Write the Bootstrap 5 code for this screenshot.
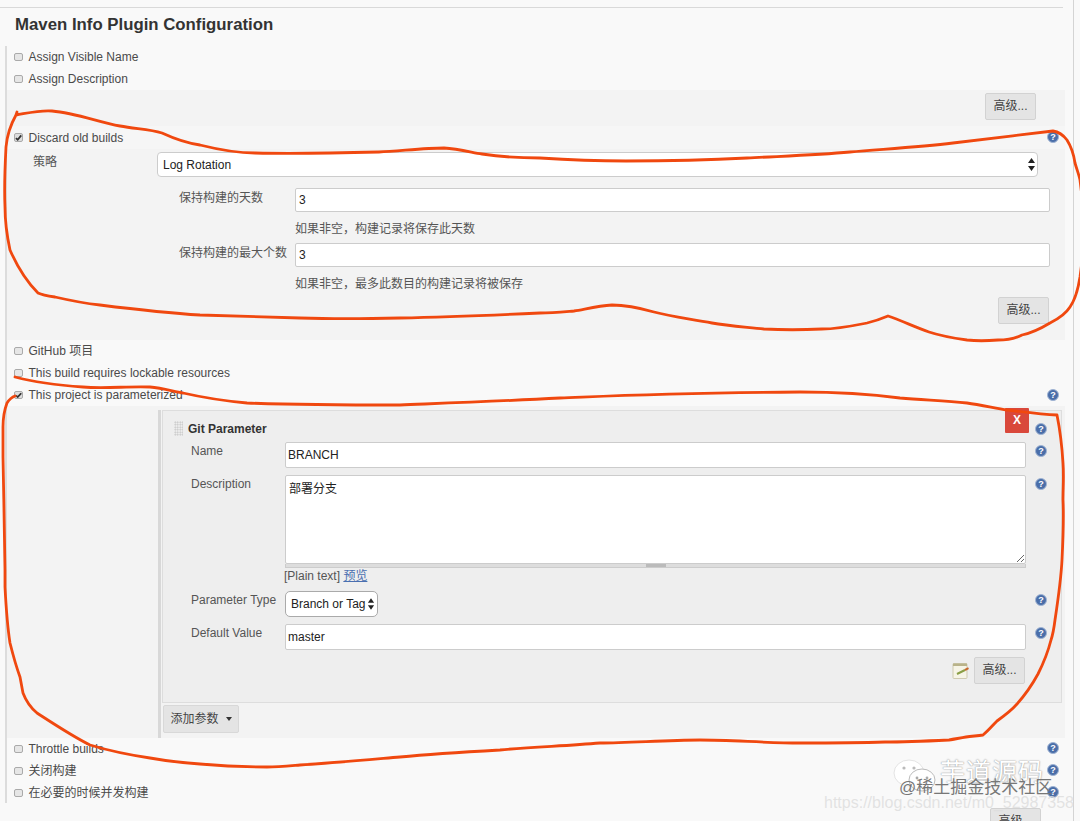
<!DOCTYPE html>
<html lang="zh">
<head>
<meta charset="utf-8">
<title>Maven Info Plugin Configuration</title>
<link rel="stylesheet" href="https://cdn.jsdelivr.net/npm/bootstrap@5.3.0/dist/css/bootstrap.min.css">
<style>
html,body{height:821px;overflow:hidden}
body{background:#f9f9f9;color:#4a4a4a;font-family:"Liberation Sans","Noto Sans CJK SC",sans-serif;font-size:12px;line-height:16px}
.shell{position:relative;width:1080px;height:821px;overflow:hidden}
.edge-r{width:1074px;height:821px;border-right:1px solid #d4d4d4;padding-top:7px}
.top-rule{width:1063px;height:1px;background:#d9d9d9}
.page-title{height:38px;margin:0;padding:7px 0 0 15px;font-size:16.8px;line-height:20px;font-weight:700;color:#333;font-family:inherit}
.sect{margin-left:5px;border-left:2px solid #dcdcdc;width:1060px;height:757px}
.chk{height:22px;padding-left:7px;gap:6px}
.chk .form-check-input{width:8.5px;height:8.5px;margin:0;flex:none;border:1px solid #aaa;border-radius:2px;background-color:#e6e6e6;float:none}
.chk .form-check-input:checked{background-color:#ddd;border-color:#aaa;background-size:8px;background-image:url("data:image/svg+xml,%3csvg xmlns='http://www.w3.org/2000/svg' viewBox='0 0 10 10'%3e%3cpath fill='none' stroke='%23333' stroke-width='2' d='M2 5.5l2 2 4-5'/%3e%3c/svg%3e")}
.band{background:#f3f3f3}
.band-adv{height:36px;padding:3px 29px 0 0}
.btn.adv{width:51px;height:27px;padding:0;font-size:12px;line-height:25px;background:#e4e4e4;border:1px solid #d2d2d2;border-radius:2px;color:#444}
.discard{height:214px}
.discard .chk{height:23px;background:#f6f6f6}
.field{font-size:12px;color:#222;background:#fff;border:1px solid #ccc;border-radius:2px;padding:0 3px;height:26px;box-shadow:none}
.lab{color:#555;flex:none}
.sel-row{margin-top:3px;padding-left:26px}
.sel-row .lab{width:124px;padding-top:2px}
.form-select.sel-main{width:881px;height:25px;padding:0 5px;font-size:12px;color:#222;border:1px solid #ccc;border-radius:4px;flex:none;background-image:none}
.sub-row{padding-left:172px;margin-top:11px}
.sub-row .lab{width:116px;padding-top:2px}
.sub-row .field{width:755px;flex:none;height:24px}
.hint{padding-left:288px;height:15px;margin-top:8px;padding-top:1px;color:#555}
.sub-row.second{margin-top:8px}
.adv-r{padding-right:16px;margin-top:7px}
.param{height:332px;padding:4px 0 0 151px}
.param-bar{border-left:3px solid #d8d8d8;height:328px;padding-left:1px}
.param-panel{position:relative;width:900px;height:293px;background:#eee;border:1px solid #ddd;padding:10px 0 0 11px}
.param-head{height:15px;gap:5px;font-weight:700;color:#333;margin-bottom:6px;font-size:12px}
.grip{width:9px;height:15px;background-image:radial-gradient(circle,#c4c4c4 45%,transparent 50%);background-size:2.5px 2.5px}
.p-row{padding-left:17px}
.p-row .lab{width:94px;padding-top:1px}
.p-row .field{width:741px;flex:none;padding:0 2px}
.p-row.gap7{margin-top:7px}
.txt-wrap{width:741px;flex:none}
.p-row .txt-wrap .txt-area{width:100%;display:block;height:89px;min-height:0;resize:vertical;padding:4px 3px;border-bottom:1px solid #ccc}
.txt-pull{height:4px;background:#ddd;border:1px solid #ccc;border-top:0;position:relative}
.txt-pull span{display:block;width:20px;height:3px;margin:0 auto;background:#bbb}
.plain{padding-left:110px;height:16px;margin-top:0;margin-bottom:7px;color:#555}
.plain a{color:#4a6fb0}
.form-select.sel-mini{width:93px;height:26px;padding:0 5px;font-size:12px;color:#222;border:1px solid #aaa;border-radius:5px;background-image:none;flex:none}
.btn.kill{position:absolute;right:32px;top:-3px;width:24px;height:25px;padding:0;background:#d9483b;border:0;border-radius:1px;color:#fff;font-weight:700;font-size:12px;line-height:25px}
.help-dot{position:absolute;width:12px;height:12px;border-radius:50%;background:#4a6ea9;border:1px solid #9fb3d3;color:#fff;font-size:9px;line-height:10px;text-align:center;font-weight:700}
.note{gap:4px;padding-right:36px;margin-top:7px}
.btn.add-p{width:76px;height:28px;margin:2px 0 0 1px;padding:0;background:#e4e4e4;border:1px solid #d8d8d8;border-radius:2px;color:#444;font-size:12px;line-height:26px}
.caret-s{display:inline-block;margin-left:7px;vertical-align:2px;border-top:4px solid #333;border-left:3px solid transparent;border-right:3px solid transparent}
.bottom-adv{position:absolute;left:990px;top:808px}
.ink{position:absolute;left:0;top:0;pointer-events:none}
.ww{position:absolute;white-space:nowrap}
.ww-a{left:940px;top:757px;font-size:25px;line-height:30px;color:#fff;letter-spacing:1px;text-shadow:0 0 1px #999,0 0 2px #aaa}
.ww-b{left:899px;top:779px;font-size:17px;line-height:18px;color:#777}
.ww-c{left:824px;top:793px;font-size:16px;line-height:20px;color:rgba(222,222,222,.85)}
.arrows{position:absolute;pointer-events:none}
</style>
</head>
<body>
<div class="shell">
  <div class="edge-r">
    <div class="top-rule"></div>
    <h1 class="page-title">Maven Info Plugin Configuration</h1>
    <div class="sect">
      <label class="chk d-flex align-items-center"><input class="form-check-input" type="checkbox"><span>Assign Visible Name</span></label>
      <label class="chk d-flex align-items-center"><input class="form-check-input" type="checkbox"><span>Assign Description</span></label>
      <div class="band band-adv d-flex justify-content-end"><button class="btn adv" type="button">高级...</button></div>
      <div class="band discard">
        <label class="chk d-flex align-items-center"><input class="form-check-input" type="checkbox" checked><span>Discard old builds</span></label>
        <div class="sel-row d-flex"><span class="lab">策略</span><select class="form-select sel-main"><option>Log Rotation</option></select></div>
        <div class="sub-row d-flex"><span class="lab">保持构建的天数</span><input class="form-control field" value="3"></div>
        <div class="hint">如果非空，构建记录将保存此天数</div>
        <div class="sub-row second d-flex"><span class="lab">保持构建的最大个数</span><input class="form-control field" value="3"></div>
        <div class="hint">如果非空，最多此数目的构建记录将被保存</div>
        <div class="adv-r d-flex justify-content-end"><button class="btn adv" type="button">高级...</button></div>
      </div>
      <label class="chk d-flex align-items-center"><input class="form-check-input" type="checkbox"><span>GitHub 项目</span></label>
      <label class="chk d-flex align-items-center"><input class="form-check-input" type="checkbox"><span>This build requires lockable resources</span></label>
      <label class="chk d-flex align-items-center"><input class="form-check-input" type="checkbox" checked><span>This project is parameterized</span></label>
      <div class="band param">
        <div class="param-bar">
          <div class="param-panel">
            <button class="btn kill" type="button">X</button>
            <div class="param-head d-flex align-items-center"><span class="grip"></span><span>Git Parameter</span></div>
            <div class="p-row d-flex"><span class="lab">Name</span><input class="form-control field" value="BRANCH"></div>
            <div class="p-row gap7 d-flex"><span class="lab">Description</span><div class="txt-wrap"><textarea class="form-control field txt-area">部署分支</textarea><div class="txt-pull"><span></span></div></div></div>
            <div class="plain">[Plain text] <a href="#">预览</a></div>
            <div class="p-row d-flex"><span class="lab">Parameter Type</span><select class="form-select sel-mini"><option>Branch or Tag</option></select></div>
            <div class="p-row gap7 d-flex"><span class="lab">Default Value</span><input class="form-control field" value="master"></div>
            <div class="note d-flex justify-content-end align-items-center">
              <svg width="18" height="18" viewBox="0 0 18 18"><rect x="1" y="1.5" width="14" height="15" rx="1" fill="#f6f4e6" stroke="#cfcab0"/><rect x="1" y="1.5" width="14" height="2.5" fill="#b9b38a"/><path d="M5 12l8-4" stroke="#8a9e45" stroke-width="2"/><path d="M13 8l3.5-1.8" stroke="#c9672c" stroke-width="2"/></svg>
              <button class="btn adv" type="button">高级...</button>
            </div>
          </div>
          <button class="btn add-p" type="button">添加参数<span class="caret-s"></span></button>
        </div>
      </div>
      <label class="chk d-flex align-items-center"><input class="form-check-input" type="checkbox"><span>Throttle builds</span></label>
      <label class="chk d-flex align-items-center"><input class="form-check-input" type="checkbox"><span>关闭构建</span></label>
      <label class="chk d-flex align-items-center"><input class="form-check-input" type="checkbox"><span>在必要的时候并发构建</span></label>
    </div>
  </div>
  <button class="btn adv bottom-adv" type="button">高级...</button>

  <span class="help-dot" style="left:1047px;top:131px">?</span>
  <span class="help-dot" style="left:1047px;top:389px">?</span>
  <span class="help-dot" style="left:1035px;top:423px">?</span>
  <span class="help-dot" style="left:1035px;top:445px">?</span>
  <span class="help-dot" style="left:1035px;top:478px">?</span>
  <span class="help-dot" style="left:1035px;top:594px">?</span>
  <span class="help-dot" style="left:1035px;top:627px">?</span>
  <span class="help-dot" style="left:1047px;top:742px">?</span>
  <span class="help-dot" style="left:1047px;top:764px">?</span>
  <span class="help-dot" style="left:1047px;top:786px">?</span>

  <svg class="arrows" style="left:1027px;top:158px" width="9" height="13" viewBox="0 0 9 13"><path d="M4.5 0L8 5H1zM4.5 13L1 8h7z" fill="#222"/></svg>
  <svg class="arrows" style="left:367px;top:598px" width="8" height="12" viewBox="0 0 9 13"><path d="M4.5 0L8 5H1zM4.5 13L1 8h7z" fill="#222"/></svg>

  <svg class="ink" width="1080" height="821" viewBox="0 0 1080 821" fill="none" stroke="#f0480f" stroke-width="2.8" stroke-linejoin="round" stroke-linecap="round">
    <path d="M17 112L16 115C28 113 40 110 52 111C76 113 98 122 120 126C136 129 150 129 162 133C175 139 186 143 200 145C220 150 236 153 255 153C300 154 340 153 379 152C400 151 425 148 444 148C458 149 470 152 482 154C502 157 520 158 540 158C570 160 598 161 626 161C670 161 710 160 747 158C785 156 818 155 850 152C885 149 920 147 953 143C985 139 1020 135 1053 131C1060 132 1064 136 1067 140C1072 148 1074 156 1075 163C1077 170 1079 175 1080 180L1086 230L1080 277C1078 290 1075 300 1070 307C1065 315 1058 319 1050 323C1040 329 1032 333 1022 335C1014 339 1006 340 998 340C986 341 976 341 967 340C953 338 941 336 929 332C915 327 900 320 888 316C881 319 875 321 867 323C852 326 838 329 822 329C802 330 782 330 764 329C746 327 728 326 712 323C692 319 672 317 654 312C640 308 626 305 612 305C598 306 586 309 574 311C562 312 552 313 540 313C495 315 445 317 400 318C360 319 330 319 300 318C265 317 232 316 200 315C165 313 132 309 100 305C82 303 68 300 55 297C48 296 42 295 38 293C28 283 17 266 10 250C7 236 5 222 5 207C4 186 5 166 6 147C7 135 11 124 16 115"/>
    <path d="M15 377C30 381 55 385 83 387C105 389 128 386 150 387C162 388 172 391 183 393C205 398 225 401 247 403C300 405 350 405 400 405C450 403 505 401 560 398C610 396 660 393 800 392C840 392 870 394 900 398C925 400 945 401 967 403C980 405 995 408 1007 410C1025 412 1040 414 1057 415C1060 430 1062 446 1063 463C1064 476 1063 488 1063 500C1064 520 1063 540 1062 560C1061 580 1058 600 1055 620C1054 628 1053 634 1051 640C1048 652 1043 664 1038 674C1032 685 1025 695 1017 704C1011 711 1004 716 997 721C992 726 988 731 983 735C977 736 972 736 966 737C960 738 955 739 949 740C928 741 906 742 885 742C855 743 828 743 800 743C765 743 732 740 700 740C665 740 630 743 600 743C565 746 530 747 500 750C465 752 432 754 400 757C365 760 332 763 300 765C288 766 278 767 267 767C244 767 222 766 200 764C183 763 167 761 150 758C130 755 110 751 90 745C72 736 54 724 37 713C31 708 26 701 23 693C22 688 21 682 20 677C16 666 13 655 10 643C7 624 6 606 5 587C5 580 5 574 5 570C4 530 4 495 3 457C3 447 3 437 3 427C3 419 4 411 7 403C9 400 12 397 15 396"/>
  </svg>

  <svg class="arrows" style="left:893px;top:758px" width="46" height="36" viewBox="0 0 46 36"><ellipse cx="16" cy="15" rx="15" ry="13" fill="#fff" stroke="#e4e4e4"/><ellipse cx="29" cy="22" rx="13" ry="11" fill="#fff" stroke="#bbb"/><circle cx="11" cy="10" r="1.6" fill="#bbb"/><circle cx="21" cy="10" r="1.6" fill="#bbb"/><circle cx="24" cy="20" r="1.4" fill="#aaa"/><circle cx="34" cy="20" r="1.4" fill="#aaa"/></svg>
  <span class="ww ww-a">芋道源码</span>
  <span class="ww ww-b">@稀土掘金技术社区</span>
  <span class="ww ww-c">https://blog.csdn.net/m0_52987358</span>
</div>
</body>
</html>
